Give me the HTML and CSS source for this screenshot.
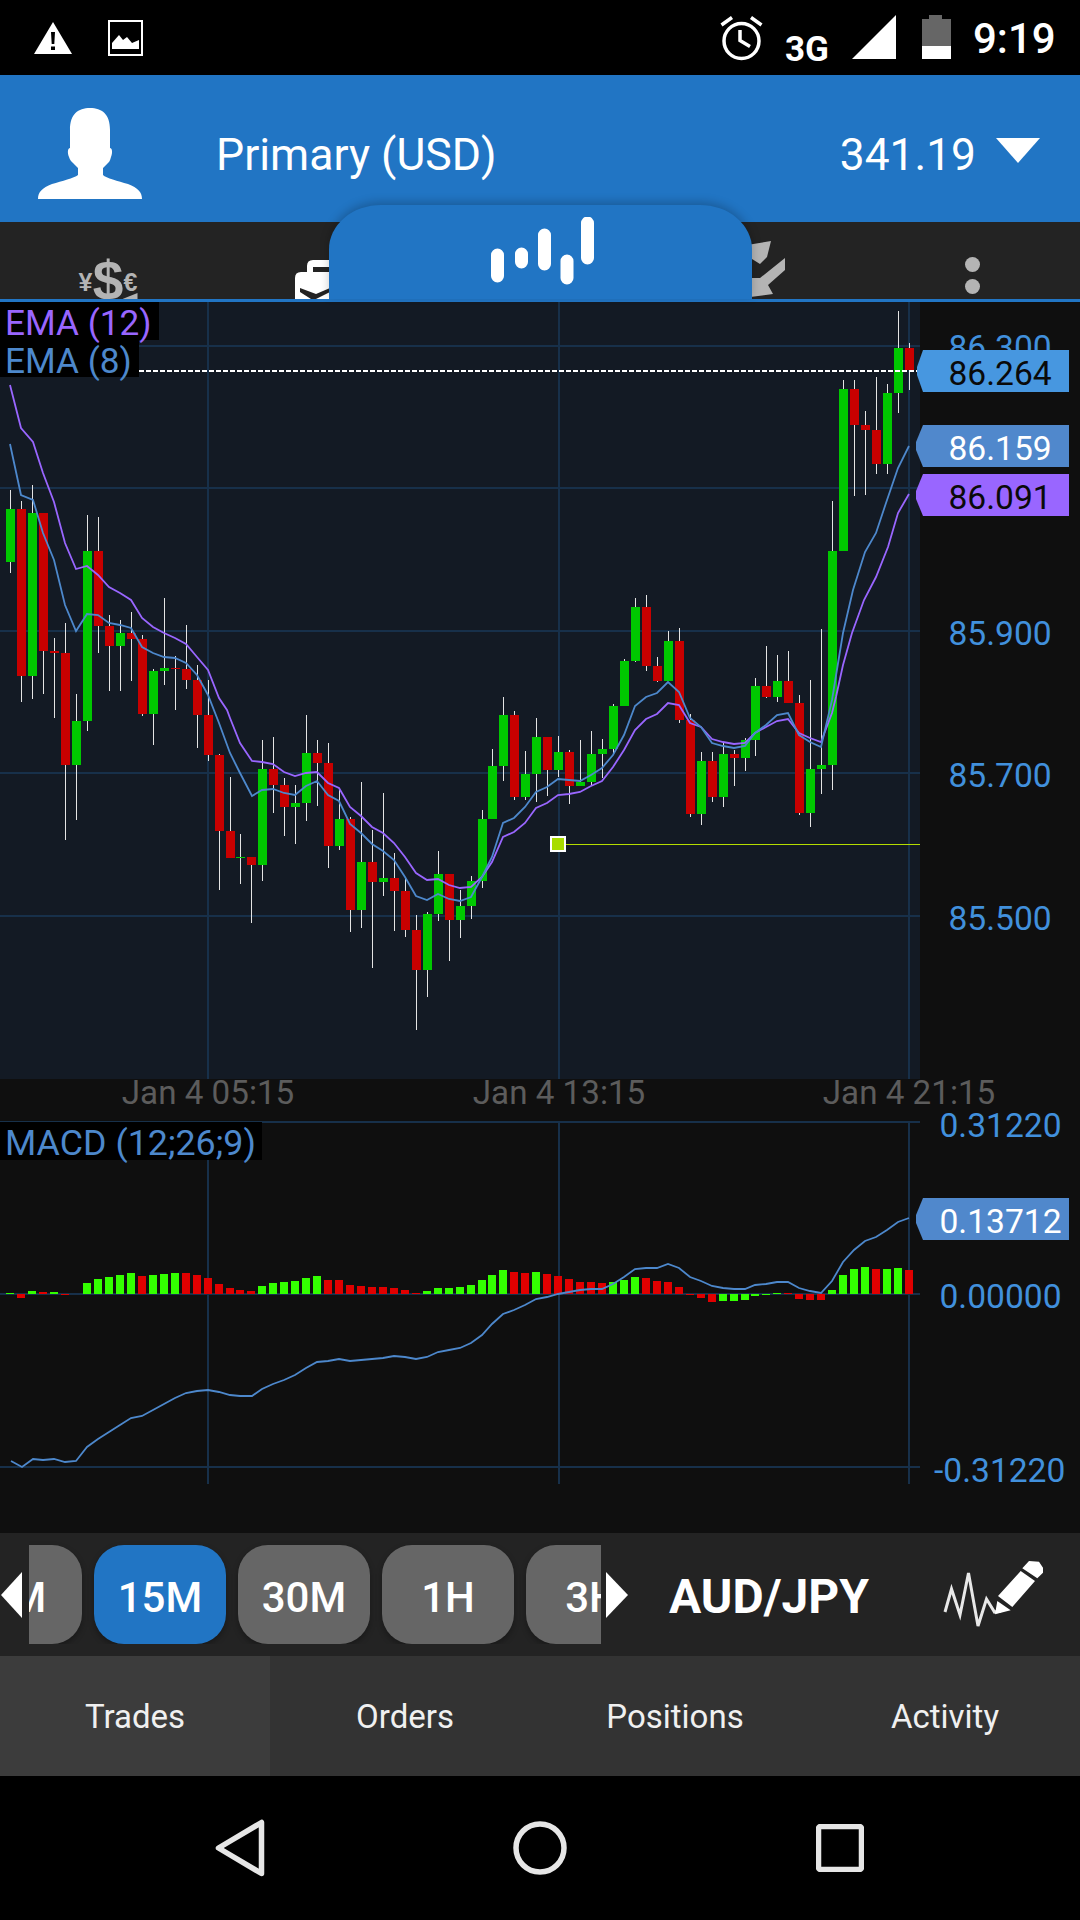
FILE: index.html
```html
<!DOCTYPE html>
<html lang="en">
<head>
<meta charset="utf-8">
<title>AUD/JPY chart</title>
<link rel="stylesheet" href="styles.css">
</head>
<body>
<div class="screen">
  <div class="status">
    <svg class="st-warn" viewBox="0 0 38 32"><path class="w" d="M19 0 38 32H0Z"/><path class="k" d="M17 10h4l-.7 12h-2.600zM17 24.500h4V28h-4z"/></svg>
    <svg class="st-img" viewBox="0 0 35 36"><rect class="wo" x="1" y="1" width="33" height="34"/><path class="w" d="M4 29V23L11 15 15 20 19 17 24 23 31 20V29Z"/></svg>
    <svg class="st-alarm" viewBox="720 15 44 46"><circle class="wo3" cx="741.500" cy="41" r="17.500"/><path class="wo3" d="M721.500 25 732 17.500M751 17.500 761.500 25M740 30V40.500L750 46.500"/></svg>
    <span class="st-net">3G</span>
    <svg class="st-sig" viewBox="853 15 45 44"><path class="w" d="M853 59 897 15V59Z"/></svg>
    <svg class="st-bat" viewBox="923 15 29 44"><path class="g" d="M930 15h13v4h9v27h-29V19h7z"/><path class="w" d="M923 46h29v13h-29z"/></svg>
    <span class="st-time">9:19</span>
  </div>

  <header class="account">
    <svg class="avatar" viewBox="0 0 104 91"><path class="w" d="M52 0C64 0 72 6 72 22L72 40C74 40 75 44 73 49 72 53 71 54 70 55L65 60 65 67C68 70 80 73 90 76 100 80 104 84 104 91L0 91C0 84 4 80 14 76 24 73 36 70 40 67L40 60 35 55C33 53 32 52 31 49 29 44 30 40 32 40L32 22C32 6 40 0 52 0Z"/></svg>
    <span class="acc-name">Primary (USD)</span>
    <span class="acc-bal">341.19</span>
    <svg class="acc-caret" viewBox="0 0 44 25"><path class="w" d="M0 0H44L22 25Z"/></svg>
  </header>

  <nav class="tabbar">
    <div class="tab-icons">
      <div class="tab-cell">
        <div class="money"><span class="cur">¥</span><span class="dollar">$</span><span class="cur">€</span></div>
      </div>
      <div class="tab-cell">
        <svg class="brief" viewBox="295 260 58 39"><path class="w" d="M295 278q0-6 6-6h6v-6q0-6 6-6h22q6 0 6 6v6h6q6 0 6 6v21h-58Z"/><path class="dk" d="M313 272v-5h22v5ZM300 288l16 6 14-6v4l-14 7h-5l-11-7Z"/></svg>
      </div>
      <div class="tab-cell"></div>
      <div class="tab-cell">
        <svg class="swap" viewBox="720 235 72 64"><path class="gr" d="M735 247 771 241 767 257 760 264 752 259 744 265 735 258ZM785 258V270L768 285 773 294 727 300 736 268 752 278 760 278Z"/></svg>
      </div>
      <div class="tab-cell">
        <div class="dots"><i></i><i></i></div>
      </div>
    </div>
    <div class="tab-active">
      <svg class="bars" viewBox="0 0 104 68"><path class="barline" d="M6.500 38V59M30.500 37V45M53.500 18V47M76 44V61M96.500 6V41"/></svg>
    </div>
  </nav>

  <svg class="chart" viewBox="0 302 1080 1231">
    <rect class="bg-plot" x="0" y="302" width="920" height="777"/>
    <path class="grid" d="M0 346H920M0 488H920M0 631H920M0 773H920M0 916H920M208 302V1079M559 302V1079M909 302V1079"/>
    <path class="wick" d="M10.500 490V573M21.500 501V702M32.500 485V699M43.500 513V694M54.500 638V718M65.500 623V840M76.500 694V820M87.500 515V731M98.500 517V653M109.500 615V691M120.500 620V691M131.500 612V681M142.500 635V716M153.500 669V745M164.500 598V685M175.500 656V710M186.500 625V689M197.500 665V748M208.500 680V761M219.500 754V890M230.500 777V858M240.500 834V884M251.500 857V923M262.500 740V881M273.500 737V813M284.500 778V836M295.500 785V844M306.500 715V821M317.500 740V806M328.500 743V868M339.500 790V850M350.500 817V932M361.500 782V928M372.500 830V968M383.500 793V896M394.500 853V931M405.500 877V937M416.500 915V1030M427.500 912V997M438.500 851V921M449.500 874V961M460.500 890V938M471.500 876V919M482.500 810V888M492.500 749V819M503.500 697V781M514.500 711V800M525.500 751V800M536.500 718V802M547.500 737V796M558.500 736V777M569.500 750V804M580.500 740V786M591.500 731V786M602.500 739V778M613.500 704V754M624.500 659V706M635.500 598V662M646.500 595V671M657.500 657V682M668.500 631V681M679.500 628V723M690.500 714V817M701.500 752V825M712.500 752V802M723.500 742V807M734.500 750V786M745.500 738V771M755.500 678V756M766.500 646V698M777.500 655V702M788.500 651V703M799.500 695V815M810.500 680V827M821.500 629V794M832.500 501V790M843.500 380V551M854.500 380V496M865.500 411V495M876.500 377V474M887.500 384V474M898.500 311V413M909.500 343V390"/>
    <path class="up" d="M10.500 509V562M32.500 513V676M76.500 721V765M87.500 551V721M120.500 633V646M153.500 671V714M164.500 668V671M240.500 857V858M262.500 769V865M295.500 803V807M306.500 753V803M339.500 819V846M361.500 862V910M383.500 878V882M427.500 914V970M438.500 874V914M460.500 906V920M471.500 881V906M482.500 819V881M492.500 766V819M503.500 715V766M525.500 774V797M536.500 737V774M558.500 752V770M580.500 782V786M591.500 754V782M602.500 749V754M613.500 706V749M624.500 661V706M635.500 607V661M668.500 641V681M701.500 761V814M723.500 754V797M745.500 740V758M755.500 686V740M777.500 681V697M810.500 769V813M821.500 765V769M832.500 551V765M843.500 389V551M887.500 393V464M898.500 348V393"/>
    <path class="down" d="M21.500 509V676M43.500 513V651M54.500 651V653M65.500 653V765M98.500 551V626M109.500 626V646M131.500 633V639M142.500 639V714M175.500 668V669M186.500 669V680M197.500 680V715M208.500 715V755M219.500 755V831M230.500 831V858M251.500 857V865M273.500 769V785M284.500 785V807M317.500 753V763M328.500 763V846M350.500 819V910M372.500 862V882M394.500 878V891M405.500 891V930M416.500 930V970M449.500 874V920M514.500 715V797M547.500 737V770M569.500 752V786M646.500 607V666M657.500 666V681M679.500 641V720M690.500 720V814M712.500 761V797M734.500 754V758M766.500 686V697M788.500 681V703M799.500 703V813M854.500 389V425M865.500 425V430M876.500 430V464M909.500 348V370"/>
    <polyline class="ema12" points="10,385 21,428 33,442 43,473 54,502 65,543 76,569 87,566 98,575 109,587 120,593 131,600 142,618 153,627 164,633 175,638 186,644 197,657 208,670 219,698 227,710 230,718 240,743 252,761 262,762 273,764 284,772 295,776 306,773 317,772 328,783 339,788 350,807 361,816 372,827 383,833 394,843 405,857 416,873 427,880 438,879 449,885 460,888 471,887 482,877 492,862 503,837 514,832 525,823 536,808 547,803 558,795 569,794 580,792 591,786 602,781 613,767 624,750 635,730 646,719 657,714 668,703 679,705 690,723 701,727 712,739 723,742 734,744 745,743 755,733 766,727 777,721 788,719 799,733 810,738 821,742 832,713 836,697 843,665 852,633 864,600 876,577 888,547 898,513 909,494"/>
    <polyline class="ema8" points="10,444 21,495 33,500 43,533 54,560 65,605 76,631 87,614 98,615 109,623 120,625 131,628 142,647 153,653 164,657 175,658 186,663 197,675 208,695 219,723 230,753 240,773 252,796 262,790 273,789 284,793 295,795 306,786 317,781 328,795 339,801 350,824 361,833 372,844 383,851 394,860 405,877 416,896 427,900 438,894 449,899 460,901 471,897 482,877 492,857 503,823 514,818 525,807 536,792 547,787 558,779 569,780 580,781 591,775 602,768 613,755 624,735 635,706 646,697 657,693 668,682 679,692 690,718 701,727 712,743 723,746 734,748 745,746 755,733 766,725 777,715 788,713 799,735 810,742 821,747 832,700 843,633 853,590 865,552 876,533 886,503 898,468 909,446"/>
    <path class="last" d="M139 371H917"/>
    <path class="level" d="M566 844.500H920"/>
    <rect class="marker" x="551" y="837" width="14" height="14"/>

    <rect class="legend-bg" x="0" y="302" width="159" height="38"/>
    <rect class="legend-bg" x="0" y="340" width="139" height="37"/>
    <text class="t t-ema t-purple" x="5" y="335">EMA (12)</text>
    <text class="t t-ema t-blue" x="5" y="373">EMA (8)</text>

    <text class="t t-axis" x="948.500" y="359">86.300</text>
    <text class="t t-axis" x="948.500" y="645">85.900</text>
    <text class="t t-axis" x="948.500" y="787">85.700</text>
    <text class="t t-axis" x="948.500" y="930">85.500</text>

    <polygon class="tag-price" points="923,350 1069,350 1069,392 923,392 917,375 917,367"/>
    <text class="t t-dark" x="948.500" y="385">86.264</text>
    <polygon class="tag-ema8" points="923,425 1069,425 1069,467 923,467 916,450 916,442"/>
    <text class="t t-light" x="948.500" y="460">86.159</text>
    <polygon class="tag-ema12" points="923,474 1069,474 1069,516 923,516 916,499 916,491"/>
    <text class="t t-dark" x="948.500" y="509">86.091</text>

    <text class="t t-time" x="208" y="1104">Jan 4 05:15</text>
    <text class="t t-time" x="559" y="1104">Jan 4 13:15</text>
    <text class="t t-time" x="909" y="1104">Jan 4 21:15</text>

    <path class="grid" d="M0 1122H920M0 1294H920M0 1467H920M208 1122V1484M559 1122V1484M909 1122V1484"/>
    <path class="hist-up" d="M10 1294v-1M32 1294v-3M54 1294v-2M87 1294v-11M98 1294v-15M109 1294v-17M120 1294v-19M131 1294v-21M153 1294v-19M164 1294v-20M175 1294v-21M262 1294v-8M273 1294v-11M284 1294v-12M295 1294v-13M306 1294v-16M317 1294v-18M427 1294v-3M438 1294v-6M449 1294v-6M460 1294v-7M471 1294v-9M482 1294v-14M492 1294v-19M503 1294v-24M536 1294v-22M613 1294v-12M624 1294v-14M635 1294v-17M723 1294v7M734 1294v7M745 1294v6M755 1294v2M766 1294v1M777 1294v-1M832 1294v-4M843 1294v-19M854 1294v-25M865 1294v-27M887 1294v-25M898 1294v-26"/>
    <path class="hist-down" d="M21 1294v4M43 1294v-2M65 1294v1M142 1294v-18M186 1294v-21M197 1294v-19M208 1294v-16M219 1294v-10M230 1294v-6M240 1294v-4M251 1294v-3M328 1294v-14M339 1294v-14M350 1294v-9M361 1294v-8M372 1294v-7M383 1294v-7M394 1294v-6M405 1294v-4M416 1294v-1M514 1294v-22M525 1294v-21M547 1294v-20M558 1294v-18M569 1294v-15M580 1294v-12M591 1294v-12M602 1294v-11M646 1294v-16M657 1294v-13M668 1294v-12M679 1294v-7M690 1294v1M701 1294v4M712 1294v8M788 1294v-1M799 1294v5M810 1294v6M821 1294v6M876 1294v-25M909 1294v-24"/>
    <polyline class="macd" points="11,1461 22,1467 33,1459 43,1460 54,1459 65,1462 76,1461 87,1447 98,1439 109,1432 120,1425 131,1418 142,1416 153,1410 164,1404 175,1398 186,1393 197,1391 208,1390 219,1392 230,1395 240,1396 252,1396 262,1389 273,1384 284,1380 295,1375 306,1368 317,1362 328,1361 339,1359 350,1361 361,1360 372,1359 383,1358 394,1356 405,1357 416,1359 427,1357 438,1352 449,1350 460,1348 471,1343 482,1335 492,1324 503,1314 514,1310 525,1305 536,1299 547,1297 558,1294 569,1292 580,1290 591,1289 602,1289 613,1284 624,1277 635,1269 646,1268 657,1268 668,1264 679,1268 690,1277 701,1281 712,1286 723,1288 734,1289 745,1289 755,1285 766,1284 777,1282 788,1282 799,1288 810,1291 821,1293 832,1281 843,1262 854,1250 865,1241 876,1237 887,1230 898,1222 909,1218"/>
    <rect class="legend-bg" x="0" y="1122" width="262" height="38"/>
    <text class="t t-legend t-blue" x="5" y="1155">MACD (12;26;9)</text>

    <text class="t t-axis" x="939.500" y="1137">0.31220</text>
    <polygon class="tag-ema8" points="923,1198 1069,1198 1069,1240 923,1240 916,1223 916,1215"/>
    <text class="t t-light" x="939.500" y="1233">0.13712</text>
    <text class="t t-axis" x="939.500" y="1308">0.00000</text>
    <text class="t t-axis" x="934" y="1482">-0.31220</text>
  </svg>

  <div class="toolbar">
    <svg class="arrow-l" viewBox="0 0 21 46"><path class="w" d="M21 0V46L0 23Z"/></svg>
    <div class="strip">
      <button class="tf tf-first">5M</button>
      <button class="tf tf-on">15M</button>
      <button class="tf">30M</button>
      <button class="tf">1H</button>
      <button class="tf">3H</button>
    </div>
    <svg class="arrow-r" viewBox="0 0 22 46"><path class="w" d="M0 0V46L22 23Z"/></svg>
    <span class="pair">AUD/JPY</span>
    <svg class="draw" viewBox="940 1555 110 78">
      <polyline class="pulse" points="946,1611 952.500,1588 961,1614 969.500,1572 979,1625 987.500,1598 995.500,1611 1002,1610"/>
      <path class="w" d="M999 1595 1021.700 1570 1036 1580 1013.300 1606ZM1023.300 1567.300 1030 1560 1040 1560.700 1044 1566.700V1571.700L1038.300 1577.300ZM998.300 1600 1011.700 1609.300 996 1613.300Z"/>
    </svg>
  </div>

  <div class="subtabs">
    <div class="subtab subtab-on">Trades</div>
    <div class="subtab">Orders</div>
    <div class="subtab">Positions</div>
    <div class="subtab">Activity</div>
  </div>

  <div class="navbar">
    <div class="nav-cell"><svg class="nav-back" viewBox="0 0 50 58"><path class="navline" d="M46.500 3.500V54.500L3.500 29Z"/></svg></div>
    <div class="nav-cell"><svg class="nav-home" viewBox="0 0 54 54"><circle class="navline" cx="27" cy="27" r="24"/></svg></div>
    <div class="nav-cell"><svg class="nav-rec" viewBox="0 0 48 48"><rect class="navline" x="2.500" y="2.500" width="43" height="43" rx="2"/></svg></div>
  </div>
</div>
</body>
</html>
```

FILE: styles.css
```css
* { box-sizing: border-box; }
html, body { margin: 0; padding: 0; background: #000; }
body { font-family: Roboto, "Liberation Sans", sans-serif; color: #fff; }
.screen { width: 1080px; height: 1920px; overflow: hidden; display: flex; flex-direction: column; background: #0f0f0f; }

.w { fill: #fff; }
.k { fill: #000; }
.g { fill: #666; }
.dk { fill: #232323; }
.gr { fill: #b4b4b4; }
.wo { fill: none; stroke: #fff; stroke-width: 2; }
.wo3 { fill: none; stroke: #fff; stroke-width: 3.500; }

/* status bar */
.status { height: 75px; flex: none; background: #000; display: flex; align-items: flex-start; padding-left: 34px; }
.st-warn { width: 38px; height: 32px; margin-top: 22px; }
.st-img { width: 35px; height: 36px; margin-top: 20px; margin-left: 36px; }
.st-alarm { width: 44px; height: 46px; margin-top: 15px; margin-left: 577px; }
.st-net { font-size: 35px; font-weight: 700; line-height: 25px; margin-top: 37px; margin-left: 21px; width: 44px; }
.st-sig { width: 45px; height: 44px; margin-top: 15px; margin-left: 23px; }
.st-bat { width: 29px; height: 44px; margin-top: 15px; margin-left: 25px; }
.st-time { font-size: 42px; font-weight: 500; line-height: 50px; margin-top: 14px; margin-left: 22px; }

/* account header */
.account { height: 147px; flex: none; background: #2175c4; display: flex; align-items: center; padding: 10px 40px 0 38px; }
.avatar { width: 104px; height: 91px; }
.acc-name { font-size: 44.600px; margin-left: 74px; margin-top: 2px; }
.acc-bal { font-size: 44.300px; margin-left: auto; margin-top: 2px; }
.acc-caret { width: 44px; height: 25px; margin-left: 20px; margin-top: -6px; }

/* main tabs */
.tabbar { height: 80px; flex: none; position: relative; background: #232323; border-bottom: 3px solid #2175c4; }
.tab-icons { height: 77px; overflow: hidden; display: flex; }
.tab-cell { width: 216px; flex: none; display: flex; justify-content: center; align-items: flex-start; }
.money { position: relative; display: flex; align-items: flex-start; padding-top: 29px; font-family: "Liberation Sans", sans-serif; font-weight: 700; color: #b4b4b4; }
.money::after { content: ""; position: absolute; right: 0; top: 71px; width: 15px; height: 6px; background: #b4b4b4; clip-path: polygon(100% 0, 100% 100%, 0 100%); }
.cur { font-size: 25px; line-height: 24px; margin-top: 19px; width: 14px; display: flex; justify-content: center; }
.dollar { font-size: 55px; line-height: 60px; width: 31px; display: flex; justify-content: center; }
.brief { width: 58px; height: 39px; margin-top: 38px; }
.swap { width: 72px; height: 64px; margin-top: 13px; }
.dots { display: flex; flex-direction: column; gap: 7px; margin-top: 35px; }
.dots i { width: 15px; height: 15px; border-radius: 50%; background: #b4b4b4; }
.tab-active { position: absolute; left: 329px; top: -17px; width: 423px; height: 94px; background: #2175c4; border-radius: 52px 52px 0 0 / 44px 44px 0 0; box-shadow: 0 -3px 10px rgba(0, 0, 0, .22); display: flex; justify-content: center; }
.bars { width: 104px; height: 68px; margin-top: 12px; margin-left: 5px; }
.barline { fill: none; stroke: #fff; stroke-width: 13; stroke-linecap: round; }

/* chart */
.chart { display: block; width: 1080px; height: 1231px; flex: none; }
.bg-plot { fill: #131a24; }
.grid { fill: none; stroke: #17304a; stroke-width: 2; }
.wick { fill: none; stroke: #e4e4e4; stroke-width: 1; }
.up { fill: none; stroke: #00c800; stroke-width: 9; }
.down { fill: none; stroke: #c80000; stroke-width: 9; }
.ema12 { fill: none; stroke: #9966ff; stroke-width: 1.800; }
.ema8 { fill: none; stroke: #4d88cc; stroke-width: 1.800; }
.macd { fill: none; stroke: #4d88cc; stroke-width: 1.800; }
.last { fill: none; stroke: #fff; stroke-width: 2; stroke-dasharray: 5 2; }
.level { fill: none; stroke: #b4dc00; stroke-width: 1; }
.marker { fill: #a8dc00; stroke: #fff; stroke-width: 2; }
.legend-bg { fill: #000; }
.hist-up { fill: none; stroke: #33ff00; stroke-width: 8; }
.hist-down { fill: none; stroke: #e00000; stroke-width: 8; }
.tag-price { fill: #4797e0; }
.tag-ema8 { fill: #5088cc; }
.tag-ema12 { fill: #9966ff; }
.t { font-family: Roboto, "Liberation Sans", sans-serif; font-size: 33.600px; }
.t-legend { font-size: 35.800px; }
.t-ema { font-size: 35.200px; }
.t-purple { fill: #9966ff; }
.t-blue { fill: #4d88cc; }
.t-axis { fill: #4190dc; }
.t-dark { fill: #0a0a0a; }
.t-light { fill: #fff; }
.t-time { fill: #5c5c5c; text-anchor: middle; font-size: 33.200px; }

/* toolbar */
.toolbar { height: 123px; flex: none; background: #232323; display: flex; align-items: center; }
.arrow-l { width: 21px; height: 46px; margin-left: 1px; flex: none; }
.strip { width: 572px; height: 111px; margin-left: 7px; padding-top: 12px; padding-bottom: 12px; align-self: flex-start; flex: none; overflow: hidden; display: flex; gap: 12px; }
.tf { flex: none; width: 132px; height: 99px; border: 0; padding: 6px 0 0; border-radius: 30px; background: #666; color: #fff; font: 500 42px Roboto, "Liberation Sans", sans-serif; box-shadow: 0 3px 6px rgba(0, 0, 0, .3); }
.tf-first { margin-left: -79px; }
.tf-on { background: #2175c4; }
.arrow-r { width: 22px; height: 46px; margin-left: 5px; flex: none; }
.pair { font-size: 48px; font-weight: 700; margin-left: 41px; margin-top: 4px; width: 270px; white-space: nowrap; }
.draw { width: 110px; height: 78px; flex: none; }
.pulse { fill: none; stroke: #e8e8e8; stroke-width: 3; }

/* sub tabs */
.subtabs { height: 120px; flex: none; background: #333; display: flex; }
.subtab { flex: 1; display: flex; align-items: center; justify-content: center; font-size: 33px; color: #f0f0f0; }
.subtab-on { background: #3c3c3c; }

/* system nav */
.navbar { flex: 1; background: #000; display: flex; justify-content: center; align-items: center; }
.nav-cell { width: 300px; display: flex; justify-content: center; }
.navline { fill: none; stroke: #e6e6e6; stroke-width: 5.500; stroke-linejoin: round; }
.nav-back { width: 50px; height: 58px; }
.nav-home { width: 54px; height: 54px; }
.nav-rec { width: 48px; height: 48px; }
```
